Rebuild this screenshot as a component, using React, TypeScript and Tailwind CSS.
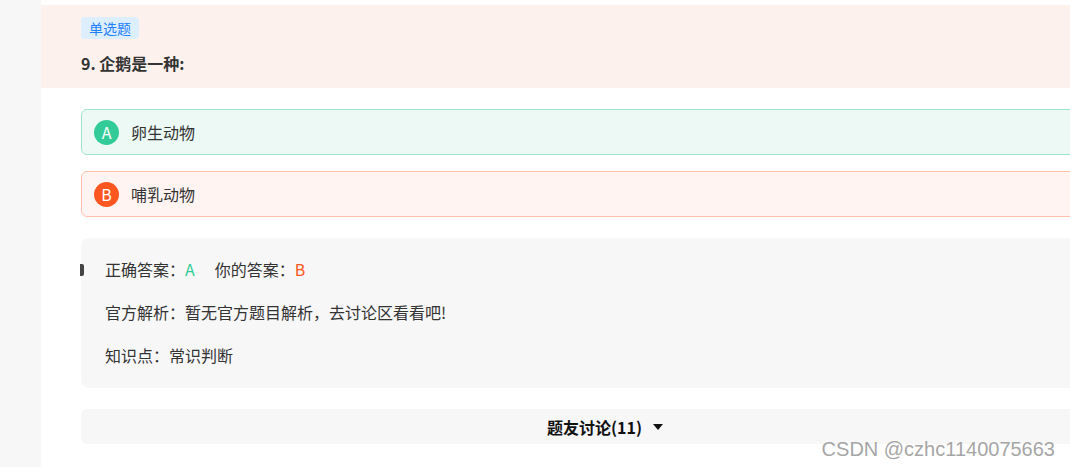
import { useState } from "react"

type Option = {
  key: string
  label: string
  status: "correct" | "wrong"
}

const options: Option[] = [
  { key: "A", label: "卵生动物", status: "correct" },
  { key: "B", label: "哺乳动物", status: "wrong" },
]

const App = () => {
  const [open, setOpen] = useState(false)

  return (
    <div className="relative flex h-[467px] w-full overflow-hidden bg-white font-['Noto_Sans_CJK_SC',sans-serif] text-[#333]">
      {/* left rail */}
      <div className="w-[41px] shrink-0 bg-[#f7f7f7]" />

      <div className="w-[1130px] shrink-0 pt-[5px]">
        {/* question header */}
        <div className="h-[83px] bg-[#fdf1ed] pl-[40px] pt-[12px]">
          <div className="h-[22px] w-fit rounded-[4px] bg-[#ddeffe] px-[8px] text-[14px] leading-[22px] text-[#1e80ff]">
            单选题
          </div>
          <h2 className="mt-[12px] text-[16px] font-bold leading-[24px] text-[#333]">
            9. 企鹅是一种:
          </h2>
        </div>

        <div className="w-[1088px] pl-[40px]">
          {/* options */}
          <div className="mt-[21px] flex flex-col gap-[16px]">
            {options.map((opt) => (
              <div
                key={opt.key}
                className={
                  opt.status === "correct"
                    ? "flex h-[46px] items-center gap-[12px] rounded-[6px] border border-[#a3e2cb] bg-[#ecf9f5] pl-[12px]"
                    : "flex h-[46px] items-center gap-[12px] rounded-[6px] border border-[#fdbfab] bg-[#fff4f1] pl-[12px]"
                }
              >
                <span
                  className={
                    opt.status === "correct"
                      ? "flex h-[25px] w-[25px] items-center justify-center rounded-full bg-[#33cc99] text-[16px] text-white"
                      : "flex h-[25px] w-[25px] items-center justify-center rounded-full bg-[#fe5621] text-[16px] text-white"
                  }
                >
                  {opt.key}
                </span>
                <span className="text-[16px] leading-[24px] text-[#333]">{opt.label}</span>
              </div>
            ))}
          </div>

          {/* analysis */}
          <div className="relative mt-[21px] flex h-[150px] flex-col gap-[19px] rounded-[8px] bg-[#f7f7f7] pl-[24px] pt-[19px] text-[16px] leading-[24px] text-[#333]">
            <span className="absolute left-[-1px] top-[26px] h-[12px] w-[4px] rounded-r-[2px] bg-[#444]" />
            <p>
              正确答案：<span className="text-[#33cc99]">A</span>
              <span className="ml-[20px]">你的答案：</span>
              <span className="text-[#fe5621]">B</span>
            </p>
            <p>官方解析：暂无官方题目解析，去讨论区看看吧!</p>
            <p>知识点：常识判断</p>
          </div>

          {/* discussion toggle */}
          <button
            onClick={() => setOpen(!open)}
            className="mt-[21px] flex h-[35px] w-full items-center justify-center gap-[11px] rounded-[6px] bg-[#f7f7f7] text-[16px] font-bold text-[#111]"
          >
            <span>题友讨论(11)</span>
            <svg width="10" height="6" viewBox="0 0 10 6" className={open ? "rotate-180" : ""}>
              <path d="M0 0 L10 0 L5 6 Z" fill="#111" />
            </svg>
          </button>
        </div>
      </div>

      {/* watermark */}
      <span className="pointer-events-none absolute bottom-[7px] right-[15px] font-['Liberation_Sans',sans-serif] text-[20px] leading-[22px] text-[#a6a6a6]">
        CSDN @czhc1140075663
      </span>
    </div>
  )
}

export default App
